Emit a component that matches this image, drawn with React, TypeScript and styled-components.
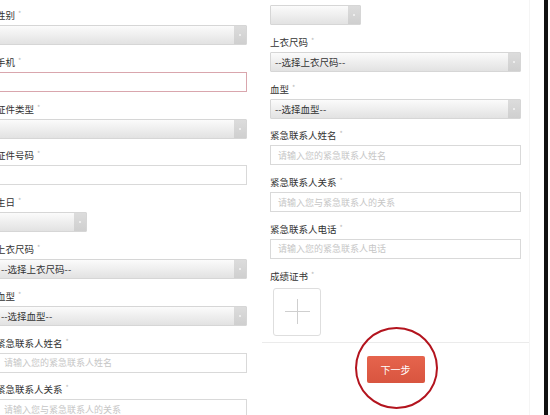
import React from "react";
import styled, { createGlobalStyle } from "styled-components";

const Global = createGlobalStyle`
  html, body { margin: 0; padding: 0; background: #fff; }
  body { font-family: "Noto Sans CJK SC", "Noto Sans", sans-serif; }
  * { box-sizing: border-box; }
`;

const Root = styled.div`
  width: 550px;
  height: 415px;
  overflow: hidden;
  display: flex;
  background: #fff;
`;

const LeftPanel = styled.div`
  flex: 0 0 262px;
  margin-left: -4px;
  padding-top: 8px;
  display: flex;
  flex-direction: column;
`;

const RightPanel = styled.div`
  flex: 0 0 268px;
  margin-left: 4px;
  display: flex;
  flex-direction: column;
  border-right: 1px solid #f5f5f5;
`;

const RightForm = styled.div`
  padding: 0 8px;
  margin-top: -12px;
  display: flex;
  flex-direction: column;
`;

const Spacer = styled.div`
  flex: 0 0 14px;
`;

const BlackEdge = styled.div`
  flex: 0 0 4px;
  background: #111;
`;

const Group = styled.div`
  display: flex;
  flex-direction: column;
  margin-bottom: 9.8px;
`;

const Label = styled.div`
  height: 14px;
  line-height: 14px;
  font-size: 9.5px;
  color: #333;
  margin-bottom: 3px;
  white-space: nowrap;
`;

const Star = styled.span`
  color: #b9b9b9;
  font-size: 7px;
  vertical-align: top;
  margin-left: 3px;
  line-height: 10px;
`;

const SelectBox = styled.div<{ $w: number }>`
  width: ${(p) => p.$w}px;
  height: 20px;
  display: flex;
  align-items: center;
  border: 1px solid #d6d6d6;
  border-radius: 1px;
  background: linear-gradient(#fbfbfb, #e2e2e2);
  overflow: hidden;
`;

const SelectText = styled.div`
  flex: 1;
  padding-left: 4px;
  font-size: 9.5px;
  color: #333;
  white-space: nowrap;
`;

const Arrow = styled.div`
  flex: 0 0 12px;
  height: 100%;
  background: linear-gradient(#dcdcdc, #cfcfcf);
  display: flex;
  align-items: center;
  justify-content: center;
  &::after {
    content: "";
    width: 2px;
    height: 2px;
    border-radius: 1px;
    background: #f4f4f4;
  }
`;

const Input = styled.div<{ $error?: boolean }>`
  width: 251px;
  height: 20px;
  border: 1px solid ${(p) => (p.$error ? "#d9a6ad" : "#d9d9d9")};
  background: #fff;
  display: flex;
  align-items: center;
  padding-left: 7px;
  font-size: 9px;
  color: #c6c6c6;
  white-space: nowrap;
`;

const Upload = styled.div`
  width: 48px;
  height: 48px;
  margin-top: 2px;
  margin-left: 3px;
  border: 1px solid #dedede;
  border-radius: 3px;
  display: flex;
  align-items: center;
  justify-content: center;
`;

const Footer = styled.div`
  position: relative;
  margin-top: -4px;
  border-top: 1px solid #ebebeb;
  display: flex;
  justify-content: center;
  padding-top: 13px;
`;

const NextButton = styled.button`
  width: 58px;
  height: 27px;
  border: none;
  border-radius: 2px;
  background: linear-gradient(#e6644d, #d8553f);
  color: #fff;
  font-family: "Noto Sans CJK SC", sans-serif;
  font-size: 10px;
  padding: 0;
`;

const Ring = styled.div`
  position: absolute;
  left: 50%;
  top: -16px;
  width: 83px;
  height: 82px;
  margin-left: -41px;
  border: 2px solid #b3141e;
  border-radius: 50%;
  pointer-events: none;
`;

type FieldDef =
  | { label: string; kind: "select"; text?: string; w?: number }
  | { label: string; kind: "input"; placeholder?: string; error?: boolean };

const Field: React.FC<{ f: FieldDef }> = ({ f }) => (
  <Group>
    <Label>
      {f.label}
      <Star>*</Star>
    </Label>
    {f.kind === "select" ? (
      <SelectBox $w={f.w ?? 251}>
        <SelectText>{f.text ?? ""}</SelectText>
        <Arrow />
      </SelectBox>
    ) : (
      <Input $error={f.error}>{f.placeholder ?? ""}</Input>
    )}
  </Group>
);

const leftFields: FieldDef[] = [
  { label: "性别", kind: "select" },
  { label: "手机", kind: "input", error: true },
  { label: "证件类型", kind: "select" },
  { label: "证件号码", kind: "input" },
  { label: "生日", kind: "select", w: 91 },
  { label: "上衣尺码", kind: "select", text: "--选择上衣尺码--" },
  { label: "血型", kind: "select", text: "--选择血型--" },
  { label: "紧急联系人姓名", kind: "input", placeholder: "请输入您的紧急联系人姓名" },
  { label: "紧急联系人关系", kind: "input", placeholder: "请输入您与紧急联系人的关系" },
];

const rightFields: FieldDef[] = [
  { label: "生日", kind: "select", w: 91 },
  { label: "上衣尺码", kind: "select", text: "--选择上衣尺码--" },
  { label: "血型", kind: "select", text: "--选择血型--" },
  { label: "紧急联系人姓名", kind: "input", placeholder: "请输入您的紧急联系人姓名" },
  { label: "紧急联系人关系", kind: "input", placeholder: "请输入您与紧急联系人的关系" },
  { label: "紧急联系人电话", kind: "input", placeholder: "请输入您的紧急联系人电话" },
];

export default function App() {
  return (
    <>
      <Global />
      <Root>
        <LeftPanel>
          {leftFields.map((f, i) => (
            <Field key={i} f={f} />
          ))}
        </LeftPanel>
        <RightPanel>
          <RightForm>
            {rightFields.map((f, i) => (
              <Field key={i} f={f} />
            ))}
            <Group>
              <Label>
                成绩证书
                <Star>*</Star>
              </Label>
              <Upload>
                <svg width="27" height="27" viewBox="0 0 27 27">
                  <path d="M13.5 1v25M1 13.5h25" stroke="#cfcfcf" strokeWidth="1" fill="none" />
                </svg>
              </Upload>
            </Group>
          </RightForm>
          <Footer>
            <NextButton>下一步</NextButton>
            <Ring />
          </Footer>
        </RightPanel>
        <Spacer />
        <BlackEdge />
      </Root>
    </>
  );
}
